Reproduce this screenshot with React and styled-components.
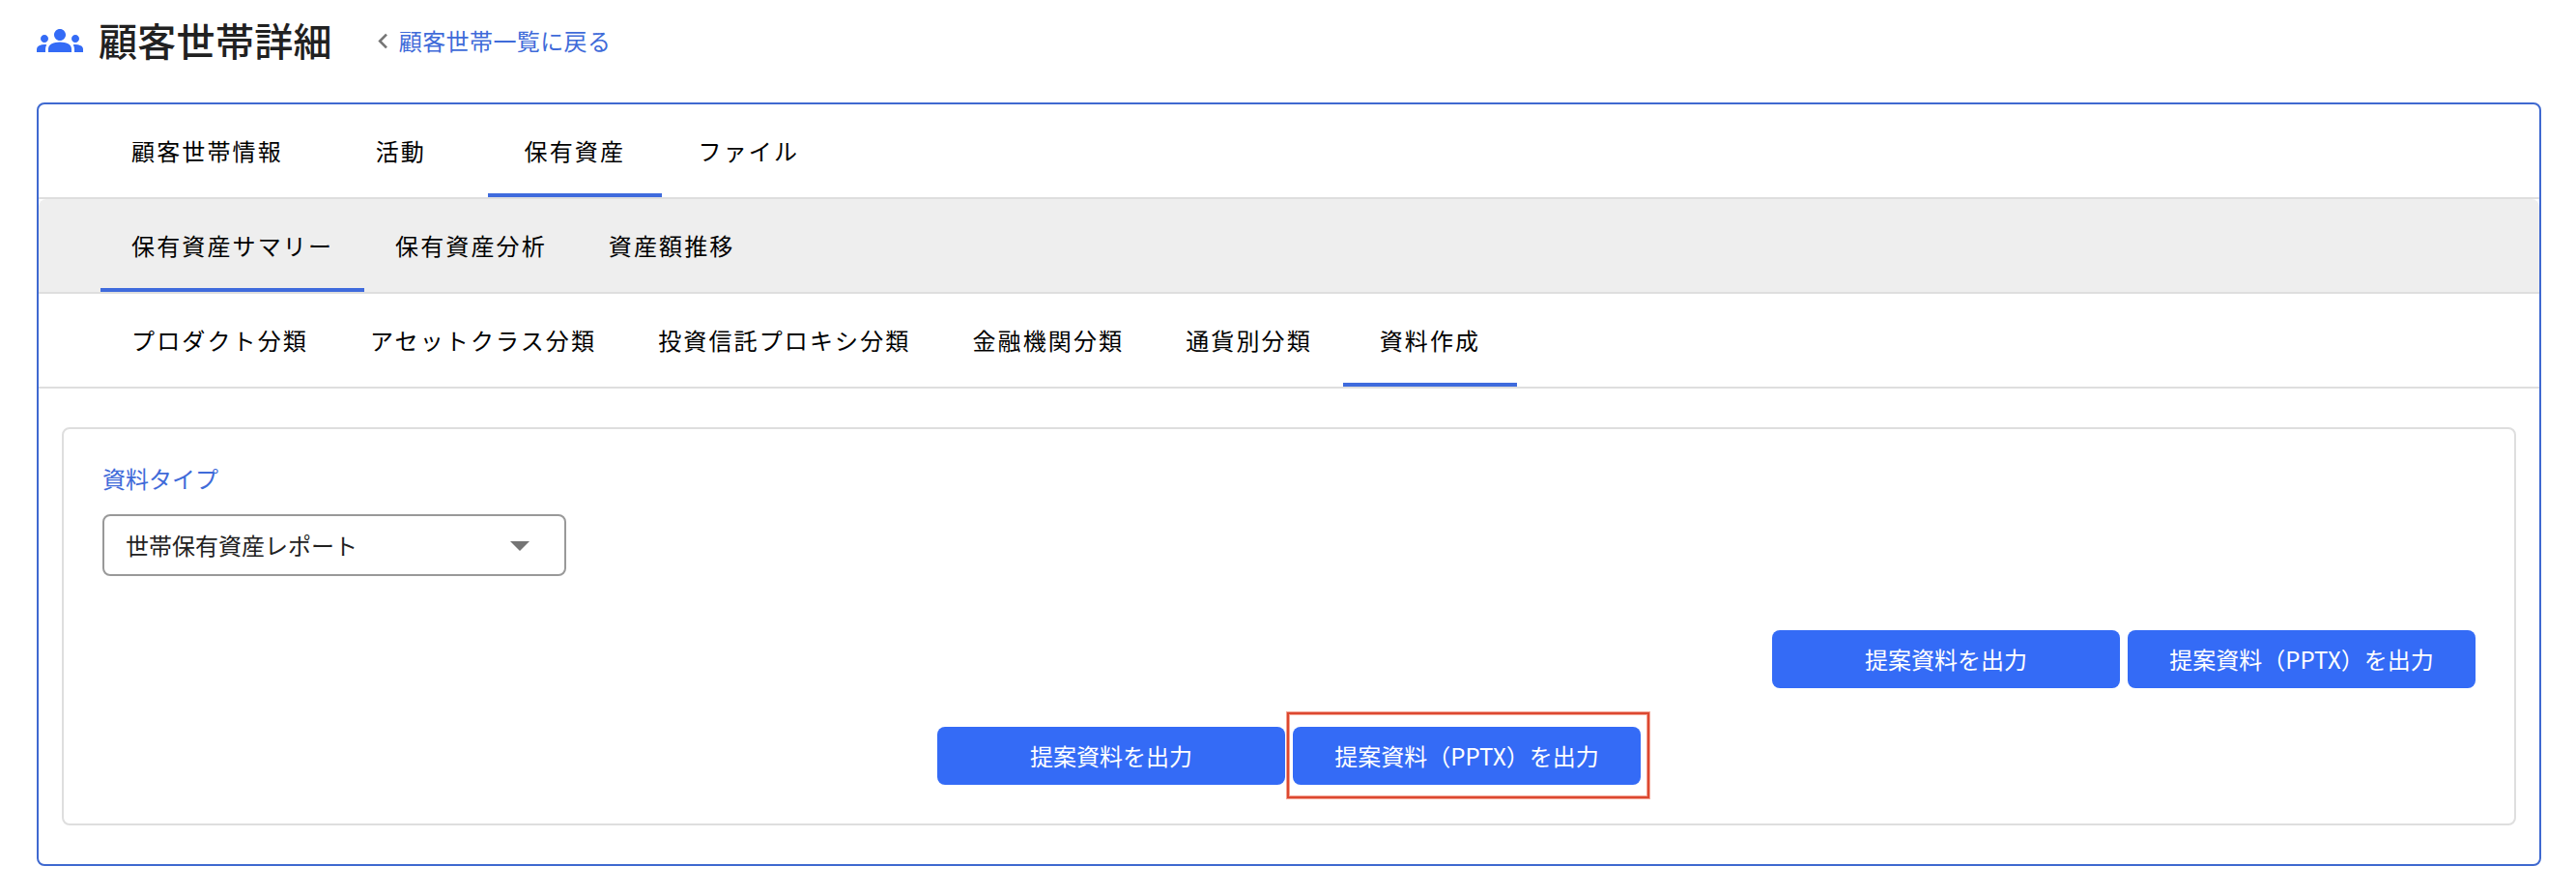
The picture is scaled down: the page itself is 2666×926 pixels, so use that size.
import { useState } from "react";
import styled, { createGlobalStyle } from "styled-components";
import { MdGroups, MdChevronLeft, MdArrowDropDown } from "react-icons/md";

const MAIN_TABS = ["顧客世帯情報", "活動", "保有資産", "ファイル"];
const ASSET_TABS = ["保有資産サマリー", "保有資産分析", "資産額推移"];
const SUMMARY_TABS = [
  "プロダクト分類",
  "アセットクラス分類",
  "投資信託プロキシ分類",
  "金融機関分類",
  "通貨別分類",
  "資料作成",
];

function Tabs({ items, initial, gray }) {
  const [active, setActive] = useState(initial);

  return (
    <TabBar $gray={gray}>
      {items.map((item) => (
        <Tab key={item} $active={item === active} onClick={() => setActive(item)}>
          {item}
        </Tab>
      ))}
    </TabBar>
  );
}

export default function App() {
  return (
    <>
      <GlobalStyle />
      <Page>
        <Header>
          <MdGroups size={48} color="#346bf6" />
          <Title>顧客世帯詳細</Title>
          <BackLink href="#">
            <MdChevronLeft size={31} color="#757575" />
            <span>顧客世帯一覧に戻る</span>
          </BackLink>
        </Header>

        <Frame>
          <Tabs items={MAIN_TABS} initial="保有資産" />
          <Tabs items={ASSET_TABS} initial="保有資産サマリー" gray />
          <Tabs items={SUMMARY_TABS} initial="資料作成" />

          <Card>
            <Label>資料タイプ</Label>
            <Select>
              <span>世帯保有資産レポート</span>
              <MdArrowDropDown size={48} color="#757575" />
            </Select>

            <Actions $align="flex-end" $top={56}>
              <Button>提案資料を出力</Button>
              <Button>提案資料（PPTX）を出力</Button>
            </Actions>
            <Actions $align="center" $top={40}>
              <Button>提案資料を出力</Button>
              <Marked>
                <Button>提案資料（PPTX）を出力</Button>
              </Marked>
            </Actions>
          </Card>
        </Frame>
      </Page>
    </>
  );
}

const GlobalStyle = createGlobalStyle`
  * {
    box-sizing: border-box;
  }

  body {
    margin: 0;
    background: #fff;
    color: #212121;
    font-family: "Noto Sans CJK JP", sans-serif;
    font-size: 24px;
  }

  button {
    font-family: inherit;
    font-size: inherit;
    cursor: pointer;
  }
`;

const Page = styled.div`
  padding: 0 36px 30px 38px;
`;

const Header = styled.header`
  display: flex;
  align-items: center;
  height: 106px;
  padding-bottom: 22px;
`;

const Title = styled.h1`
  margin: 0 0 0 16px;
  padding-bottom: 3px;
  font-size: 40px;
  font-weight: 500;
  line-height: 60px;
  letter-spacing: 0.3px;
`;

const BackLink = styled.a`
  display: flex;
  align-items: center;
  margin-left: 37px;
  color: #3f6bd9;
  line-height: 36px;
  letter-spacing: 0.4px;
  text-decoration: none;

  svg {
    margin-right: 1px;
  }

  span {
    padding-bottom: 1px;
  }
`;

const Frame = styled.main`
  height: 790px;
  border: 2px solid #3f69d0;
  border-radius: 8px;
`;

const TabBar = styled.nav`
  display: flex;
  height: 98px;
  padding-left: 64px;
  border-bottom: 2px solid #dedede;
  border-radius: ${(props) => (props.$gray ? "8px 8px 0 0" : "0")};
  background: ${(props) => (props.$gray ? "#eeeeee" : "transparent")};
`;

const Tab = styled.button`
  min-width: 180px;
  padding: 3px 32px 0;
  border: none;
  border-bottom: 4px solid ${(props) => (props.$active ? "#3f6bdd" : "transparent")};
  background: none;
  color: #000;
  letter-spacing: 2.13px;
  white-space: nowrap;
`;

const Card = styled.section`
  height: 412px;
  margin: 40px 24px 0;
  padding: 31px 40px;
  border: 2px solid #dedede;
  border-radius: 8px;
`;

const Label = styled.div`
  color: #3f6bd9;
  line-height: 40px;
`;

const Select = styled.div`
  display: flex;
  align-items: center;
  justify-content: space-between;
  width: 480px;
  height: 64px;
  margin-top: 17px;
  padding: 0 22px;
  border: 2px solid #999;
  border-radius: 8px;

  span {
    padding-bottom: 2px;
  }
`;

const Actions = styled.div`
  display: flex;
  justify-content: ${(props) => props.$align};
  gap: 8px;
  margin-top: ${(props) => props.$top}px;
`;

const Button = styled.button`
  width: 360px;
  height: 60px;
  padding: 0 0 2px;
  border: none;
  border-radius: 8px;
  background: #346bf6;
  color: #fff;
`;

const Marked = styled.div`
  position: relative;

  /* red marker box around the button */
  &::after {
    content: "";
    position: absolute;
    top: -15px;
    right: -9px;
    bottom: -14px;
    left: -6px;
    border: 2px solid #dc4830;
    box-shadow: 0 0 0 1px #f3a494, inset 0 0 0 1px #f3a494;
    pointer-events: none;
  }
`;
